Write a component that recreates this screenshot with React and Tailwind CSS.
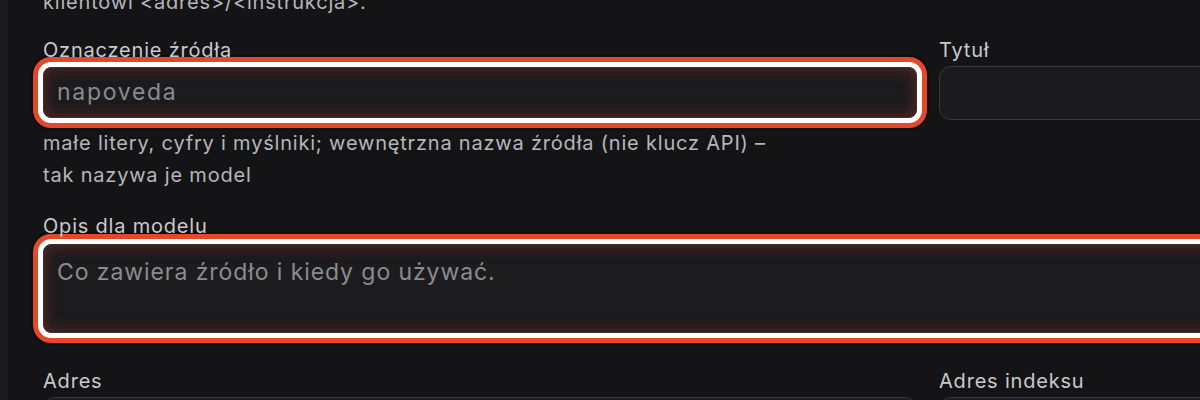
import React from "react";

const focusRing =
  "shadow-[inset_0_0_16px_rgba(190,60,40,0.4),0_0_0_5px_#ffffff,0_0_0_10px_#e2492b,0_0_0_12px_rgba(0,0,0,0.35)]";

function Label({ children }) {
  return <div className="text-[20px] leading-[28px] tracking-[0.04em] text-[#c9c9ce]">{children}</div>;
}

export default function App() {
  return (
    <div
      className="h-[400px] w-[1200px] overflow-hidden bg-[#141416] flex"
      style={{ fontFamily: "Inter, 'Noto Sans', sans-serif" }}
    >
      <div className="w-[8px] shrink-0 bg-[#1b1b1e]" />
      <div className="pl-[35px] w-[1500px] shrink-0">
        <div className="-mt-[14px] text-[20px] leading-[32px] tracking-[0.04em] text-[#b6b6bb]">
          klientowi &lt;adres&gt;/&lt;instrukcja&gt;.
        </div>

        <div className="grid grid-cols-[874px_1fr] gap-x-[22px] mt-[18px]">
          <div>
            <Label>Oznaczenie źródła</Label>
            <div
              className={`mt-[3px] h-[51px] rounded-[8px] border border-[#3a3033] bg-[#1c1b1e] flex items-center px-[13px] text-[23px] tracking-[1.7px] text-[#8b8b90] ${focusRing}`}
            >
              napoveda
            </div>
            <div className="mt-[9px] max-w-[760px] text-[20px] leading-[32px] tracking-[0.04em] text-[#b6b6bb]">
              małe litery, cyfry i myślniki; wewnętrzna nazwa źródła (nie klucz API) – tak nazywa je model
            </div>
          </div>
          <div>
            <Label>Tytuł</Label>
            <div className="mt-[2px] h-[54px] rounded-[12px] border border-[#38383d] bg-[#1b1b1e]" />
          </div>

          <div className="col-span-2 mt-[21px]">
            <Label>Opis dla modelu</Label>
            <div
              className={`mt-[4px] h-[89px] rounded-[8px] border border-[#3a3033] bg-[#1c1b1e] px-[13px] pt-[11px] text-[23px] leading-[32px] tracking-[0.04em] text-[#8b8b90] ${focusRing}`}
            >
              Co zawiera źródło i kiedy go używać.
            </div>
          </div>

          <div className="mt-[34px]">
            <Label>Adres</Label>
            <div className="mt-[2px] h-[54px] rounded-[12px] border border-[#38383d] bg-[#1b1b1e]" />
          </div>
          <div className="mt-[34px]">
            <Label>Adres indeksu</Label>
            <div className="mt-[2px] h-[54px] rounded-[12px] border border-[#38383d] bg-[#1b1b1e]" />
          </div>
        </div>
      </div>
    </div>
  );
}
